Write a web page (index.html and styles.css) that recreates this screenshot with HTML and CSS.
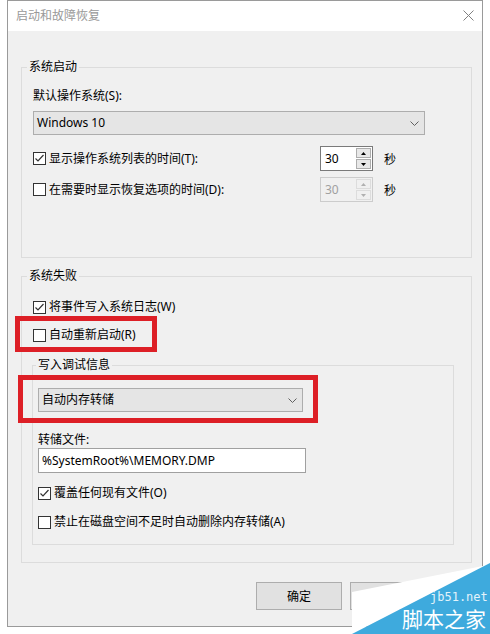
FILE: index.html
```html
<!DOCTYPE html>
<html lang="zh-CN">
<head>
  <meta charset="UTF-8" />
  <title>启动和故障恢复</title>
  <link rel="stylesheet" href="styles.css">
</head>
<body>

  <!-- DIALOG -->
  <div class="window">
    <div class="titlebar">
      <span class="title">启动和故障恢复</span>
      <svg class="close" width="11" height="11" viewBox="0 0 11 11">
        <path d="M0.5 0.5 L10.5 10.5 M10.5 0.5 L0.5 10.5" stroke="#808080" stroke-width="1" fill="none"/>
      </svg>
    </div>

    <div class="content">
      <fieldset class="group group-startup">
        <legend>系统启动</legend>
        <div class="field-label">默认操作系统(S):</div>
        <div class="combo combo-os">
          <span>Windows 10</span>
          <svg width="9" height="5" viewBox="0 0 9 5"><path d="M0.5 0.5 L4.5 4.5 L8.5 0.5" stroke="#606060" fill="none"/></svg>
        </div>

        <div class="time-row first">
          <label class="check">
            <span class="box"><svg width="11" height="11" viewBox="0 0 11 11"><path d="M1.5 5.5 L4 8 L9.5 2" stroke="#333" stroke-width="1.2" fill="none"/></svg></span>
            显示操作系统列表的时间(T):
          </label>
          <div class="spin">
            <span class="spin-value">30</span>
            <div class="spin-buttons">
              <span class="spin-btn"><svg width="5" height="3" viewBox="0 0 5 3"><path d="M0 3 L2.5 0 L5 3 Z" fill="#000"/></svg></span>
              <span class="spin-btn"><svg width="5" height="3" viewBox="0 0 5 3"><path d="M0 0 L2.5 3 L5 0 Z" fill="#000"/></svg></span>
            </div>
          </div>
          <span class="unit">秒</span>
        </div>

        <div class="time-row second">
          <label class="check">
            <span class="box"></span>
            在需要时显示恢复选项的时间(D):
          </label>
          <div class="spin disabled">
            <span class="spin-value">30</span>
            <div class="spin-buttons">
              <span class="spin-btn"><svg width="5" height="3" viewBox="0 0 5 3"><path d="M0 3 L2.5 0 L5 3 Z" fill="#b0b0b0"/></svg></span>
              <span class="spin-btn"><svg width="5" height="3" viewBox="0 0 5 3"><path d="M0 0 L2.5 3 L5 0 Z" fill="#b0b0b0"/></svg></span>
            </div>
          </div>
          <span class="unit">秒</span>
        </div>
      </fieldset>

      <fieldset class="group group-failure">
        <legend>系统失败</legend>
        <label class="check row-log">
          <span class="box"><svg width="11" height="11" viewBox="0 0 11 11"><path d="M1.5 5.5 L4 8 L9.5 2" stroke="#333" stroke-width="1.2" fill="none"/></svg></span>
          将事件写入系统日志(W)
        </label>
        <label class="check row-restart">
          <span class="box"></span>
          自动重新启动(R)
        </label>

        <fieldset class="group group-debug">
          <legend>写入调试信息</legend>
          <div class="combo combo-dump">
            <span>自动内存转储</span>
            <svg width="9" height="5" viewBox="0 0 9 5"><path d="M0.5 0.5 L4.5 4.5 L8.5 0.5" stroke="#606060" fill="none"/></svg>
          </div>
          <div class="field-label dump-label">转储文件:</div>
          <div class="textbox">%SystemRoot%\MEMORY.DMP</div>
          <label class="check row-overwrite">
            <span class="box"><svg width="11" height="11" viewBox="0 0 11 11"><path d="M1.5 5.5 L4 8 L9.5 2" stroke="#333" stroke-width="1.2" fill="none"/></svg></span>
            覆盖任何现有文件(O)
          </label>
          <label class="check row-disable">
            <span class="box"></span>
            禁止在磁盘空间不足时自动删除内存转储(A)
          </label>
        </fieldset>
      </fieldset>

      <div class="buttons">
        <button class="btn">确定</button>
        <button class="btn">取消</button>
      </div>
    </div>
  </div>

  <!-- ANNOTATIONS -->
  <div class="mark mark-restart"></div>
  <div class="mark mark-dump"></div>

  <svg class="watermark" width="150" height="79" viewBox="0 0 150 79">
    <polygon points="12,37 148,10 12,79" fill="#ffffff"/>
    <polygon points="12,79 150,8 150,79" fill="#3eaadd"/>
    <text x="90" y="46" class="wm-url">jb51.net</text>
    <text x="62" y="72" class="wm-name">脚本之家</text>
  </svg>

</body>
</html>
```

FILE: styles.css
```css
* {
  box-sizing: border-box;
}
body {
  margin: 0;
  background: #fff;
  font-family: "Noto Sans", "Noto Sans CJK SC", sans-serif;
  font-size: 12px;
  color: #000;
}

.window {
  width: 476px;
  height: 627px;
  margin-left: 7px;
  border: 1px solid #9a9a9a;
  background: #f0f0f0;
  display: flex;
  flex-direction: column;
}

.titlebar {
  height: 30px;
  flex: none;
  background: #fff;
  display: flex;
  align-items: center;
  justify-content: space-between;
  padding: 0 8px 1px 8px;
}

.title {
  color: #999;
  line-height: 16px;
}

.content {
  flex: 1;
  padding: 28px 10px 0 13px;
}

/* Group boxes */
.group {
  margin: 0;
  min-width: 0;
  border: 1px solid #dcdcdc;
  padding: 13px 17px 55px 11px;
}

.group legend {
  padding: 0 2px;
  margin-left: -6px;
  line-height: 16px;
}

.group-failure {
  margin-top: 10px;
  padding-bottom: 17px;
}

.group-debug {
  margin: 12px 0 0 -1px;
  padding: 15px 10px 12px 5px;
}

.group-debug legend {
  margin-left: -2px;
}

.field-label {
  line-height: 16px;
}

/* Combo box */
.combo {
  height: 24px;
  border: 1px solid #adadad;
  background: #e5e5e5;
  display: flex;
  align-items: center;
  justify-content: space-between;
  padding: 0 5px 0 3px;
  line-height: 16px;
}

.combo-os {
  width: 392px;
  margin-top: 7px;
}

.combo-dump {
  width: 265px;
}

.dump-label {
  margin-top: 20px;
}

.textbox {
  width: 268px;
  height: 25px;
  border: 1px solid #a0a0a0;
  background: #fff;
  padding-left: 3px;
  line-height: 23px;
}

/* Checkboxes */
.check {
  display: flex;
  align-items: center;
  gap: 3px;
  height: 20px;
  line-height: 16px;
}

.box {
  width: 13px;
  height: 13px;
  flex: none;
  border: 1px solid #333;
  background: #fff;
  display: flex;
}

.row-log { margin-top: 0; }
.row-restart { margin-top: 8px; }
.row-overwrite { margin-top: 10px; }
.row-disable { margin-top: 9px; }

/* Timeout rows */
.time-row {
  display: flex;
  align-items: center;
  height: 25px;
}

.time-row.first { margin-top: 11px; }
.time-row.second { margin-top: 6px; }

.time-row .check {
  flex: 0 0 287px;
}

.spin {
  width: 53px;
  height: 25px;
  border: 1px solid #7a7a7a;
  background: #fff;
  display: flex;
}

.spin-value {
  flex: 1;
  padding-left: 4px;
  line-height: 23px;
}

.spin-buttons {
  width: 16px;
  display: flex;
  flex-direction: column;
  gap: 1px;
  padding: 1px 1px 1px 0;
}

.spin-btn {
  flex: 1;
  border: 1px solid #adadad;
  background: #e8e8e8;
  display: flex;
  align-items: center;
  justify-content: center;
}

.spin.disabled {
  border-color: #cccccc;
  background: #f0f0f0;
  color: #a0a0a0;
}

.spin.disabled .spin-btn {
  border-color: #dcdcdc;
  background: #f0f0f0;
}

.unit {
  margin-left: 11px;
}

/* Buttons */
.buttons {
  display: flex;
  justify-content: flex-end;
  gap: 8px;
  margin-top: 19px;
  padding-right: 36px;
}

.btn {
  width: 86px;
  height: 28px;
  border: 1px solid #adadad;
  background: #e1e1e1;
  font: inherit;
  color: #000;
  padding: 0;
}

/* Red annotation boxes */
.mark {
  position: absolute;
  border: 5px solid #dd1f26;
}

.mark-restart {
  left: 15px;
  top: 316px;
  width: 142px;
  height: 36px;
}

.mark-dump {
  left: 18px;
  top: 375px;
  width: 300px;
  height: 48px;
}

/* Watermark */
.watermark {
  position: absolute;
  left: 340px;
  top: 555px;
}

.wm-url {
  font-family: "DejaVu Sans Mono", monospace;
  font-size: 12px;
  fill: #e3f3fb;
}

.wm-name {
  font-family: "Noto Sans CJK SC", sans-serif;
  font-size: 21px;
  fill: #fff;
}
```
